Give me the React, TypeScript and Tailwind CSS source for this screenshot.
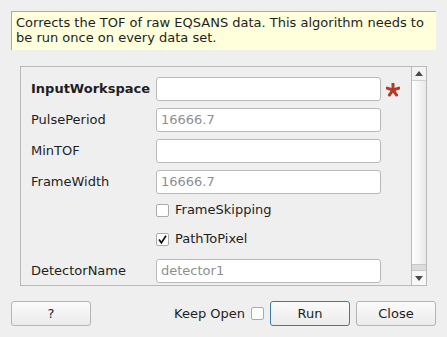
import React from "react";

const font = { fontFamily: '"DejaVu Sans", sans-serif' };

function Asterisk() {
  const arms = [-90, -18, 54, 126, 198];
  return (
    <svg width="14" height="14" viewBox="-7 -7 14 14">
      {arms.map((a) => {
        const r = (a * Math.PI) / 180;
        return (
          <line
            key={a}
            x1={0}
            y1={0}
            x2={6.2 * Math.cos(r)}
            y2={6.2 * Math.sin(r)}
            stroke="#b5392a"
            strokeWidth={3}
            strokeLinecap="round"
          />
        );
      })}
    </svg>
  );
}

function InputRow({ label, value, bold, required }: { label: string; value?: string; bold?: boolean; required?: boolean }) {
  return (
    <div className="flex h-[24px] items-center">
      <div className={`w-[135px] shrink-0 pl-[10px] text-[13px] text-[#1e1e1e] ${bold ? "font-bold" : ""}`}>{label}</div>
      <div className="flex h-[24px] w-[225px] shrink-0 items-center rounded-[3px] border border-[#b9b9b9] bg-white pl-[4px] text-[13px] text-[#8f8f8f]">
        {value}
      </div>
      {required && (
        <div className="ml-[5px] flex items-center pt-[1px]">
          <Asterisk />
        </div>
      )}
    </div>
  );
}

function CheckRow({ label, checked }: { label: string; checked?: boolean }) {
  return (
    <div className="flex h-[22px] items-start pt-[3px]">
      <div className="w-[135px] shrink-0" />
      <div className="flex h-[13px] w-[13px] items-center justify-center rounded-[2px] border border-[#ababab] bg-white">
        {checked && (
          <svg width="9" height="9" viewBox="0 0 9 9">
            <path d="M1 4.6 L3.4 7.8 L8 0.8" stroke="#111" strokeWidth="1.7" fill="none" />
          </svg>
        )}
      </div>
      <div className="ml-[6px] -mt-[2px] text-[13px] leading-[16px] text-[#1e1e1e]">{label}</div>
    </div>
  );
}

function Btn({ children, primary }: { children: React.ReactNode; primary?: boolean }) {
  return (
    <div
      className={`flex h-[25px] w-[80px] items-center justify-center rounded-[3px] border bg-gradient-to-b from-[#fbfbfb] to-[#ebebeb] text-[13px] text-[#1e1e1e] ${
        primary ? "border-[#3e7aa8] from-[#f4f6f8] to-[#e2e6ea]" : "border-[#b4b4b4]"
      }`}
    >
      {children}
    </div>
  );
}

export default function App() {
  return (
    <div className="flex h-[337px] w-[447px] flex-col bg-[#efefef] px-[11px] pt-[11px]" style={font}>
      <div className="h-[39px] border-l border-t border-[#a9a9a9] bg-[#ffffdc] pl-[4px] pt-[3px] text-[13px] leading-[15px] text-[#1e1e1e]">
        Corrects the TOF of raw EQSANS data. This algorithm needs to be run once on every data set.
      </div>

      <div className="ml-[9px] mt-[16px] flex h-[220px] w-[407px] border border-[#b9b9b9]">
        <div className="flex flex-1 flex-col gap-[7px] overflow-hidden pt-[10px]">
          <InputRow label="InputWorkspace" bold required />
          <InputRow label="PulsePeriod" value="16666.7" />
          <InputRow label="MinTOF" />
          <InputRow label="FrameWidth" value="16666.7" />
          <CheckRow label="FrameSkipping" />
          <CheckRow label="PathToPixel" checked />
          <InputRow label="DetectorName" value="detector1" />
        </div>
        <div className="flex w-[15px] shrink-0 flex-col border-l border-[#b9b9b9] bg-[#f3f3f3]">
          <div className="flex h-[14px] items-center justify-center border-b border-[#cfcfcf]">
            <svg width="8" height="5" viewBox="0 0 8 5">
              <path d="M0 5 L4 0 L8 5 Z" fill="#4a4a4a" />
            </svg>
          </div>
          <div className="h-[183px] bg-gradient-to-r from-[#ffffff] to-[#e9e9e9]" />
          <div className="h-[6px] border-t border-[#c9c9c9] bg-[#dcdcdc]" />
          <div className="flex flex-1 items-center justify-center border-t border-[#c9c9c9] bg-[#f7f7f7]">
            <svg width="8" height="5" viewBox="0 0 8 5">
              <path d="M0 0 L4 5 L8 0 Z" fill="#4a4a4a" />
            </svg>
          </div>
        </div>
      </div>

      <div className="mt-[15px] flex h-[25px] items-center">
        <Btn>?</Btn>
        <div className="flex-1" />
        <div className="text-[13px] text-[#1e1e1e]">Keep Open</div>
        <div className="ml-[6px] mr-[6px] h-[13px] w-[13px] rounded-[2px] border border-[#ababab] bg-white" />
        <Btn primary>Run</Btn>
        <div className="w-[6px]" />
        <Btn>Close</Btn>
      </div>
    </div>
  );
}
